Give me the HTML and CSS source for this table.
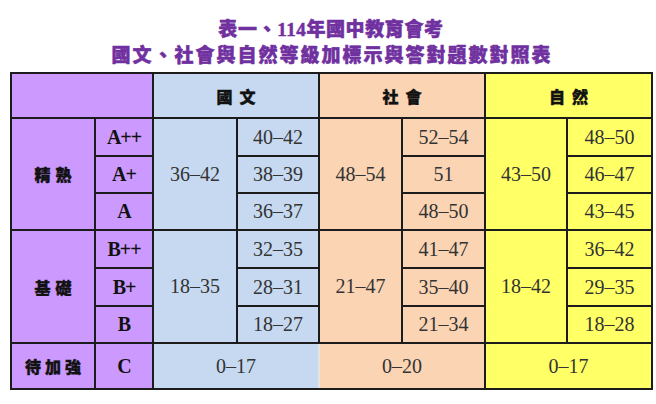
FILE: index.html
```html
<!DOCTYPE html>
<html lang="zh-Hant">
<head>
<meta charset="utf-8">
<title>表一、114年國中教育會考</title>
<link rel="stylesheet" href="styles.css">
</head>
<body>
<div class="page">
  <h1 class="title">
    <span class="t1">表一、114年國中教育會考</span>
    <span class="t2">國文、社會與自然等級加標示與答對題數對照表</span>
  </h1>
  <table class="grid">
    <colgroup>
      <col class="c-cat"><col class="c-grade">
      <col class="c-m1"><col class="c-s1">
      <col class="c-m2"><col class="c-s2">
      <col class="c-m3"><col class="c-s3">
    </colgroup>
    <tr class="r-head">
      <th colspan="2" class="pu hd-first"></th>
      <th colspan="2" class="bl hd hd-bl"><span>國文</span></th>
      <th colspan="2" class="pe hd"><span>社會</span></th>
      <th colspan="2" class="ye hd"><span>自然</span></th>
    </tr>
    <tr class="r1">
      <td rowspan="3" class="pu cat"><span>精熟</span></td>
      <td class="pu grade">A++</td>
      <td rowspan="3" class="bl num m m-bl">36–42</td>
      <td class="bl num sub">40–42</td>
      <td rowspan="3" class="pe num m m-pe">48–54</td>
      <td class="pe num sub">52–54</td>
      <td rowspan="3" class="ye num m m-ye">43–50</td>
      <td class="ye num sub">48–50</td>
    </tr>
    <tr class="r2">
      <td class="pu grade">A+</td>
      <td class="bl num sub">38–39</td>
      <td class="pe num sub">51</td>
      <td class="ye num sub">46–47</td>
    </tr>
    <tr class="r3">
      <td class="pu grade">A</td>
      <td class="bl num sub">36–37</td>
      <td class="pe num sub">48–50</td>
      <td class="ye num sub">43–45</td>
    </tr>
    <tr class="r4">
      <td rowspan="3" class="pu cat"><span>基礎</span></td>
      <td class="pu grade">B++</td>
      <td rowspan="3" class="bl num m m-bl">18–35</td>
      <td class="bl num sub">32–35</td>
      <td rowspan="3" class="pe num m m-pe">21–47</td>
      <td class="pe num sub">41–47</td>
      <td rowspan="3" class="ye num m m-ye">18–42</td>
      <td class="ye num sub">36–42</td>
    </tr>
    <tr class="r5">
      <td class="pu grade">B+</td>
      <td class="bl num sub">28–31</td>
      <td class="pe num sub">35–40</td>
      <td class="ye num sub">29–35</td>
    </tr>
    <tr class="r6">
      <td class="pu grade">B</td>
      <td class="bl num sub">18–27</td>
      <td class="pe num sub">21–34</td>
      <td class="ye num sub">18–28</td>
    </tr>
    <tr class="r7">
      <td class="pu cat cat-c"><span>待加強</span></td>
      <td class="pu grade">C</td>
      <td colspan="2" class="bl num m m-bl">0–17</td>
      <td colspan="2" class="pe num m m-pe">0–20</td>
      <td colspan="2" class="ye num m m-ye">0–17</td>
    </tr>
  </table>
</div>
</body>
</html>
```

FILE: styles.css
```css
html, body {
  margin: 0;
  padding: 0;
  background: #ffffff;
}

.page {
  width: 656px;
  height: 404px;
  overflow: hidden;
}

.title {
  margin: 0 0 0 10px;
  width: 642px;
  padding-top: 17px;
  text-align: center;
  font-family: "Liberation Serif", "Noto Sans CJK TC", serif;
  font-weight: 900;
  font-size: 19px;
  line-height: 26px;
  color: #7030a0;
  -webkit-text-stroke: 0.5px #7030a0;
}

.t1, .t2 {
  display: block;
}

.t1 {
  letter-spacing: 0.6px;
}

.t2 {
  letter-spacing: 2px;
  padding-left: 2px;
}

.grid {
  margin: 3px 0 0 10px;
  border-collapse: collapse;
  table-layout: fixed;
  width: 641px;
  border: 2px solid #1c1c1c;
}

.c-cat { width: 84px; }
.c-grade { width: 58px; }
.c-m1 { width: 84px; }
.c-s1 { width: 82px; }
.c-m2 { width: 83px; }
.c-s2 { width: 83px; }
.c-m3 { width: 82px; }
.c-s3 { width: 85px; }

.grid th,
.grid td {
  padding: 0;
  border: 2px solid #1c1c1c;
  text-align: center;
  vertical-align: middle;
}

.r-head { height: 45px; }
.r1 { height: 38px; }
.r2 { height: 37px; }
.r3 { height: 37px; }
.r4 { height: 38px; }
.r5 { height: 38px; }
.r6 { height: 37px; }
.r7 { height: 46px; }

.pu { background: #cc99ff; }
.bl { background: #c6d9f1; }
.pe { background: #fbd4b4; }
.ye { background: #ffff66; }

.hd {
  font-family: "Noto Sans CJK TC", sans-serif;
  font-weight: 900;
  font-size: 16px;
  color: #111111;
  -webkit-text-stroke: 0.4px #111111;
}

.hd span {
  letter-spacing: 7px;
  margin-right: -7px;
}

.hd-bl {
  border-left: 2px solid #e4e4e4;
}

.cat {
  font-family: "Noto Sans CJK TC", sans-serif;
  font-weight: 900;
  font-size: 16px;
  color: #111111;
  -webkit-text-stroke: 0.4px #111111;
}

.cat span {
  letter-spacing: 5px;
  margin-right: -5px;
}

.cat-c span {
  letter-spacing: 4px;
  margin-right: -4px;
}

.grade {
  font-family: "Liberation Serif", serif;
  font-weight: 700;
  font-size: 20px;
  letter-spacing: -1px;
  color: #111111;
}

.num {
  font-family: "Liberation Serif", serif;
  font-size: 20px;
  color: #333333;
}

.m {
  border-top-color: #ececec;
  border-bottom-color: #ececec;
}

.m-bl {
  border-left-color: #e4e4e4;
}

.r1 .m {
  border-top-color: #1c1c1c;
}

.r7 .m {
  border-top-color: #f0f0f0;
  border-bottom-color: #1c1c1c;
}

.r7 .m-bl {
  border-right-color: #e4e4e4;
}

.r7 .m-pe {
  border-left-color: #e4e4e4;
}
```
